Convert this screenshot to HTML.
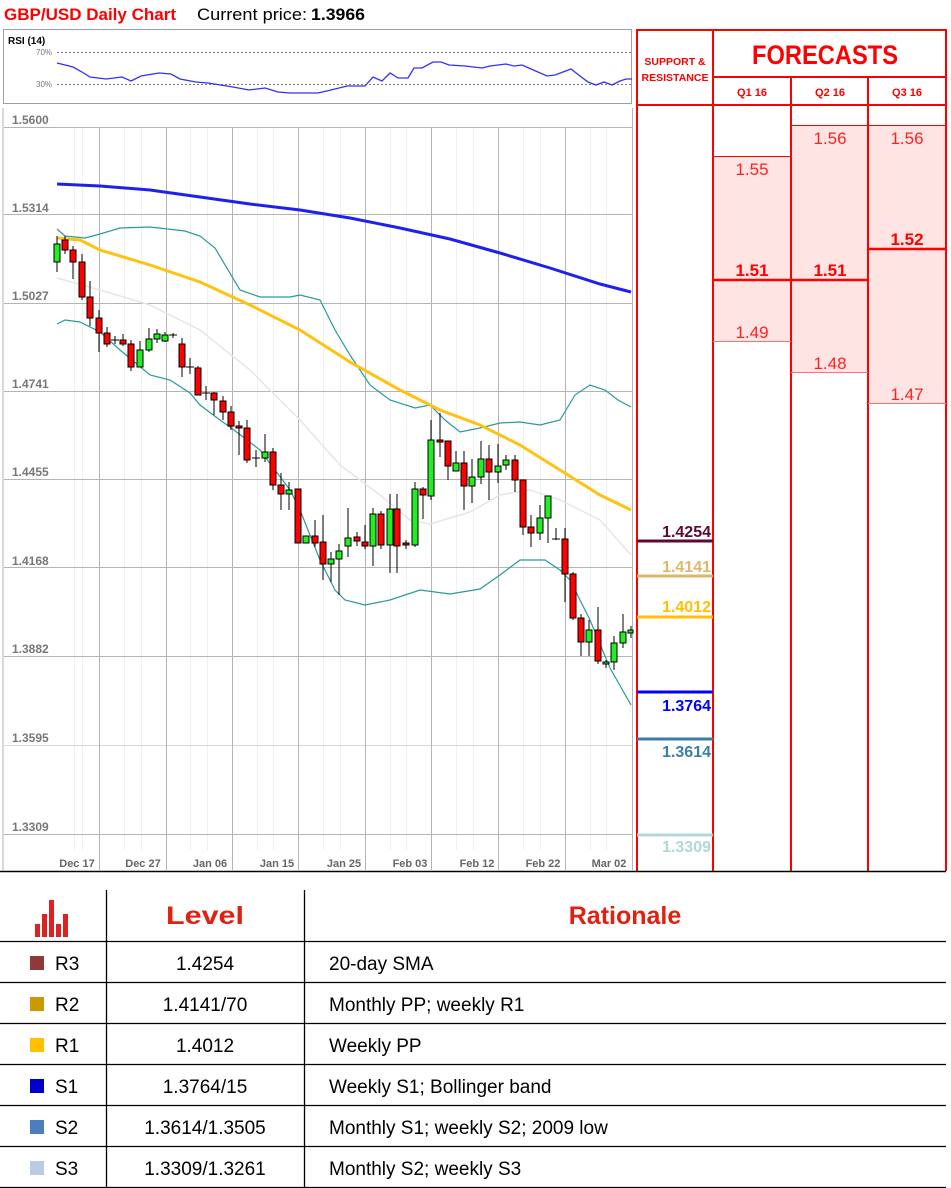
<!DOCTYPE html>
<html><head><meta charset="utf-8"><style>
html,body{margin:0;padding:0;background:#fff;}
svg{display:block;font-family:"Liberation Sans",sans-serif;}
</style></head><body>
<svg width="951" height="1188" viewBox="0 0 951 1188" xmlns="http://www.w3.org/2000/svg">
<!-- Title -->
<text x="4" y="20" font-size="17" font-weight="bold" fill="#ff0000" textLength="172" lengthAdjust="spacingAndGlyphs">GBP/USD Daily Chart</text>
<text x="197" y="20" font-size="17" fill="#000" textLength="110" lengthAdjust="spacingAndGlyphs">Current price:</text>
<text x="311" y="20" font-size="17" font-weight="bold" fill="#000" textLength="54" lengthAdjust="spacingAndGlyphs">1.3966</text>

<!-- RSI box -->
<rect x="3.5" y="29.5" width="628" height="74" fill="#fff" stroke="#a0a0a0"/>
<text x="8" y="44" font-size="10" font-weight="bold" fill="#000">RSI (14)</text>
<text x="36" y="55" font-size="8" fill="#777">70%</text>
<text x="36" y="87" font-size="8" fill="#777">30%</text>
<line x1="57" y1="52.5" x2="631" y2="52.5" stroke="#777" stroke-dasharray="2,2"/>
<line x1="57" y1="84.5" x2="631" y2="84.5" stroke="#777" stroke-dasharray="2,2"/>
<polyline fill="none" stroke="#3030ff" stroke-width="1.3" points="57,63 73,67 82,72 90,77 106,79 122,77 131,81 141,76 159,73 171,74 180,79 196,82 208,83 233,87 249,90 265,88 278,92 290,93 298,93 318,93 331,90 347,86 365,86 373,77 382,81 390,73 398,78 408,78 414,68 422,68 433,62 441,62 449,65 465,66 482,68 490,66 506,64 514,66 522,65 531,69 547,76 555,75 571,69 580,76 588,82 596,85 604,82 612,85 620,81 626,79 632,79"/>

<!-- Price chart -->
<rect x="2" y="108" width="2" height="762" fill="#d8d8d8"/>
<g stroke="#f0f0f0" stroke-width="1">
<line x1="74.5" y1="127" x2="74.5" y2="850"/><line x1="82.5" y1="127" x2="82.5" y2="850"/><line x1="124.5" y1="127" x2="124.5" y2="850"/><line x1="141.5" y1="127" x2="141.5" y2="850"/><line x1="190.5" y1="127" x2="190.5" y2="850"/><line x1="207.5" y1="127" x2="207.5" y2="850"/><line x1="257.5" y1="127" x2="257.5" y2="850"/><line x1="273.5" y1="127" x2="273.5" y2="850"/><line x1="323.5" y1="127" x2="323.5" y2="850"/><line x1="340.5" y1="127" x2="340.5" y2="850"/><line x1="390.5" y1="127" x2="390.5" y2="850"/><line x1="406.5" y1="127" x2="406.5" y2="850"/><line x1="456.5" y1="127" x2="456.5" y2="850"/><line x1="473.5" y1="127" x2="473.5" y2="850"/><line x1="523.5" y1="127" x2="523.5" y2="850"/><line x1="540.5" y1="127" x2="540.5" y2="850"/><line x1="590.5" y1="127" x2="590.5" y2="850"/><line x1="606.5" y1="127" x2="606.5" y2="850"/>
</g>
<g stroke="#b4b4b4" stroke-width="1">
<line x1="4" y1="127.5" x2="632" y2="127.5"/>
<line x1="4" y1="214.5" x2="632" y2="214.5"/>
<line x1="4" y1="303.5" x2="632" y2="303.5"/>
<line x1="4" y1="391.5" x2="632" y2="391.5"/>
<line x1="4" y1="479.5" x2="632" y2="479.5"/>
<line x1="4" y1="567.5" x2="632" y2="567.5"/>
<line x1="4" y1="656.5" x2="632" y2="656.5"/>
<line x1="4" y1="745.5" x2="632" y2="745.5" stroke="#d8d8d8"/>
<line x1="4" y1="834.5" x2="632" y2="834.5"/>
<line x1="99.5" y1="127" x2="99.5" y2="870"/>
<line x1="166.5" y1="127" x2="166.5" y2="870"/>
<line x1="232.5" y1="127" x2="232.5" y2="870"/>
<line x1="298.5" y1="127" x2="298.5" y2="870"/>
<line x1="365.5" y1="127" x2="365.5" y2="870"/>
<line x1="431.5" y1="127" x2="431.5" y2="870"/>
<line x1="498.5" y1="127" x2="498.5" y2="870"/>
<line x1="565.5" y1="127" x2="565.5" y2="870"/>
<line x1="632.5" y1="108" x2="632.5" y2="870"/>
</g>
<g font-size="12" font-weight="bold" fill="#777">
<text x="12" y="124">1.5600</text>
<text x="12" y="212">1.5314</text>
<text x="12" y="300">1.5027</text>
<text x="12" y="388">1.4741</text>
<text x="12" y="476">1.4455</text>
<text x="12" y="565">1.4168</text>
<text x="12" y="653">1.3882</text>
<text x="12" y="742">1.3595</text>
<text x="12" y="831">1.3309</text>
</g>
<g font-size="11" font-weight="bold" fill="#666" text-anchor="middle">
<text x="77" y="867">Dec 17</text><text x="143" y="867">Dec 27</text><text x="210" y="867">Jan 06</text><text x="277" y="867">Jan 15</text><text x="344" y="867">Jan 25</text><text x="410" y="867">Feb 03</text><text x="477" y="867">Feb 12</text><text x="543" y="867">Feb 22</text><text x="609" y="867">Mar 02</text>
</g>

<!-- MAs and bands -->
<polyline fill="none" stroke="#e6e6e6" stroke-width="1.5" points="57,278 100,290 150,305 200,330 250,370 300,420 340,465 380,495 410,520 430,524 470,512 500,495 530,490 560,500 600,520 631,555"/>
<polyline fill="none" stroke="#2a9a98" stroke-width="1.2" points="57,229 65,236 85,238 100,234 120,228 150,227 185,231 200,236 215,248 240,290 260,297 290,297 300,295 320,300 335,330 350,355 370,385 390,400 415,408 430,405 445,420 460,432 480,428 500,423 520,422 540,425 560,420 575,395 590,385 605,390 618,400 631,407"/>
<polyline fill="none" stroke="#2a9a98" stroke-width="1.2" points="57,324 65,320 80,322 100,332 120,350 150,375 170,380 190,393 200,405 220,420 230,427 260,450 290,490 300,510 320,560 335,590 345,600 365,605 390,600 420,590 450,594 480,589 500,575 520,560 545,560 560,570 570,580 590,620 610,668 631,705"/>
<polyline fill="none" stroke="#ffc20e" stroke-width="3" points="57,238 80,240 100,250 150,265 200,282 250,305 300,330 350,362 400,390 440,410 480,425 520,445 560,470 600,495 631,510"/>
<polyline fill="none" stroke="#2020ee" stroke-width="3" points="57,184 100,186 150,190 200,197 250,204 300,210 350,218 400,228 450,239 500,253 550,268 600,284 631,292"/>

<!-- Candles -->
<g stroke="#000" stroke-width="1">
<line x1="57" y1="236" x2="57" y2="272"/><rect x="54" y="244" width="6" height="18" fill="#22ee22"/>
<line x1="65" y1="236" x2="65" y2="254"/><rect x="62" y="240" width="6" height="10" fill="#f00"/>
<line x1="73" y1="246" x2="73" y2="279"/><rect x="70" y="250" width="6" height="12" fill="#f00"/>
<line x1="82" y1="254" x2="82" y2="300"/><rect x="79" y="262" width="6" height="35" fill="#f00"/>
<line x1="90" y1="281" x2="90" y2="326"/><rect x="87" y="297" width="6" height="21" fill="#f00"/>
<line x1="99" y1="310" x2="99" y2="352"/><rect x="96" y="318" width="6" height="15" fill="#f00"/>
<line x1="107" y1="327" x2="107" y2="347"/><rect x="104" y="333" width="6" height="11" fill="#f00"/>
<line x1="115" y1="336" x2="115" y2="344"/><line x1="111" y1="340" x2="119" y2="340"/>
<line x1="123" y1="334" x2="123" y2="346"/><rect x="120" y="340" width="6" height="4" fill="#f00"/>
<line x1="131" y1="340" x2="131" y2="371"/><rect x="128" y="344" width="6" height="23" fill="#f00"/>
<line x1="140" y1="341" x2="140" y2="367"/><rect x="137" y="350" width="6" height="17" fill="#22ee22"/>
<line x1="149" y1="328" x2="149" y2="352"/><rect x="146" y="339" width="6" height="11" fill="#22ee22"/>
<line x1="157" y1="329" x2="157" y2="343"/><rect x="154" y="334" width="6" height="5" fill="#22ee22"/>
<line x1="165" y1="332" x2="165" y2="342"/><rect x="162" y="335" width="6" height="6" fill="#22ee22"/>
<line x1="173" y1="333" x2="173" y2="338"/><line x1="169" y1="335" x2="177" y2="335"/>
<line x1="182" y1="338" x2="182" y2="377"/><rect x="179" y="344" width="6" height="23" fill="#f00"/>
<line x1="190" y1="358" x2="190" y2="374"/><line x1="186" y1="367" x2="194" y2="367"/>
<line x1="198" y1="366" x2="198" y2="395"/><rect x="195" y="368" width="6" height="27" fill="#f00"/>
<line x1="206" y1="386" x2="206" y2="400"/><line x1="202" y1="393" x2="210" y2="393"/>
<line x1="214" y1="392" x2="214" y2="415"/><rect x="211" y="393" width="6" height="7" fill="#f00"/>
<line x1="223" y1="396" x2="223" y2="420"/><rect x="220" y="401" width="6" height="11" fill="#f00"/>
<line x1="231" y1="406" x2="231" y2="430"/><rect x="228" y="412" width="6" height="14" fill="#f00"/>
<line x1="239" y1="421" x2="239" y2="455"/><rect x="236" y="426" width="6" height="2" fill="#f00"/>
<line x1="247" y1="420" x2="247" y2="463"/><rect x="244" y="428" width="6" height="32" fill="#f00"/>
<line x1="256" y1="450" x2="256" y2="467"/><line x1="252" y1="458" x2="260" y2="458"/>
<line x1="265" y1="434" x2="265" y2="462"/><rect x="262" y="452" width="6" height="6" fill="#22ee22"/>
<line x1="273" y1="448" x2="273" y2="490"/><rect x="270" y="452" width="6" height="33" fill="#f00"/>
<line x1="281" y1="473" x2="281" y2="510"/><rect x="278" y="485" width="6" height="9" fill="#f00"/>
<line x1="289" y1="482" x2="289" y2="510"/><rect x="286" y="490" width="6" height="4" fill="#22ee22"/>
<line x1="298" y1="489" x2="298" y2="543"/><rect x="295" y="489" width="6" height="54" fill="#f00"/>
<line x1="306" y1="536" x2="306" y2="543"/><rect x="303" y="536" width="6" height="7" fill="#22ee22"/>
<line x1="315" y1="520" x2="315" y2="547"/><rect x="312" y="536" width="6" height="7" fill="#f00"/>
<line x1="323" y1="515" x2="323" y2="580"/><rect x="320" y="542" width="6" height="22" fill="#f00"/>
<line x1="331" y1="552" x2="331" y2="582"/><rect x="328" y="559" width="6" height="5" fill="#22ee22"/>
<line x1="339" y1="544" x2="339" y2="595"/><rect x="336" y="551" width="6" height="8" fill="#22ee22"/>
<line x1="348" y1="508" x2="348" y2="557"/><rect x="345" y="538" width="6" height="8" fill="#22ee22"/>
<line x1="357" y1="532" x2="357" y2="546"/><rect x="354" y="537" width="6" height="4" fill="#f00"/>
<line x1="365" y1="525" x2="365" y2="549"/><rect x="362" y="542" width="6" height="4" fill="#f00"/>
<line x1="373" y1="508" x2="373" y2="566"/><rect x="370" y="514" width="6" height="32" fill="#22ee22"/>
<line x1="381" y1="511" x2="381" y2="549"/><rect x="378" y="514" width="6" height="31" fill="#f00"/>
<line x1="390" y1="494" x2="390" y2="573"/><rect x="387" y="509" width="6" height="36" fill="#22ee22"/>
<line x1="397" y1="494" x2="397" y2="573"/><rect x="394" y="509" width="6" height="37" fill="#f00"/>
<line x1="406" y1="540" x2="406" y2="549"/><rect x="403" y="543" width="6" height="2" fill="#f00"/>
<line x1="415" y1="482" x2="415" y2="547"/><rect x="412" y="489" width="6" height="56" fill="#22ee22"/>
<line x1="423" y1="487" x2="423" y2="519"/><rect x="420" y="489" width="6" height="6" fill="#f00"/>
<line x1="431" y1="420" x2="431" y2="500"/><rect x="428" y="440" width="6" height="56" fill="#22ee22"/>
<line x1="440" y1="413" x2="440" y2="457"/><rect x="437" y="440" width="6" height="2" fill="#f00"/>
<line x1="448" y1="441" x2="448" y2="480"/><rect x="445" y="441" width="6" height="25" fill="#f00"/>
<line x1="456" y1="451" x2="456" y2="471"/><rect x="453" y="463" width="6" height="8" fill="#22ee22"/>
<line x1="464" y1="451" x2="464" y2="510"/><rect x="461" y="463" width="6" height="23" fill="#f00"/>
<line x1="472" y1="459" x2="472" y2="503"/><rect x="469" y="477" width="6" height="9" fill="#22ee22"/>
<line x1="481" y1="441" x2="481" y2="484"/><rect x="478" y="459" width="6" height="18" fill="#22ee22"/>
<line x1="489" y1="445" x2="489" y2="500"/><rect x="486" y="459" width="6" height="13" fill="#f00"/>
<line x1="498" y1="444" x2="498" y2="483"/><rect x="495" y="466" width="6" height="6" fill="#22ee22"/>
<line x1="506" y1="455" x2="506" y2="470"/><rect x="503" y="460" width="6" height="5" fill="#22ee22"/>
<line x1="515" y1="455" x2="515" y2="492"/><rect x="512" y="460" width="6" height="20" fill="#f00"/>
<line x1="523" y1="480" x2="523" y2="535"/><rect x="520" y="480" width="6" height="47" fill="#f00"/>
<line x1="531" y1="515" x2="531" y2="547"/><rect x="528" y="527" width="6" height="6" fill="#f00"/>
<line x1="540" y1="505" x2="540" y2="540"/><rect x="537" y="518" width="6" height="15" fill="#22ee22"/>
<line x1="548" y1="496" x2="548" y2="543"/><rect x="545" y="496" width="6" height="22" fill="#22ee22"/>
<line x1="556" y1="528" x2="556" y2="540"/><line x1="552" y1="539" x2="560" y2="539"/>
<line x1="565" y1="528" x2="565" y2="602"/><rect x="562" y="539" width="6" height="35" fill="#f00"/>
<line x1="573" y1="572" x2="573" y2="620"/><rect x="570" y="574" width="6" height="44" fill="#f00"/>
<line x1="581" y1="614" x2="581" y2="656"/><rect x="578" y="618" width="6" height="24" fill="#f00"/>
<line x1="589" y1="620" x2="589" y2="656"/><rect x="586" y="630" width="6" height="12" fill="#22ee22"/>
<line x1="598" y1="607" x2="598" y2="664"/><rect x="595" y="630" width="6" height="31" fill="#f00"/>
<line x1="606" y1="660" x2="606" y2="668"/><rect x="603" y="662" width="6" height="2" fill="#22ee22"/>
<line x1="614" y1="636" x2="614" y2="670"/><rect x="611" y="643" width="6" height="19" fill="#22ee22"/>
<line x1="623" y1="614" x2="623" y2="648"/><rect x="620" y="632" width="6" height="11" fill="#22ee22"/>
<line x1="631" y1="626" x2="631" y2="638"/><rect x="628" y="630" width="5" height="3" fill="#22ee22"/>
</g>

<!-- Forecast panel -->
<rect x="713" y="156" width="78" height="185" fill="#ffe4e4"/>
<rect x="791" y="125" width="77" height="248" fill="#ffe4e4"/>
<rect x="868" y="125" width="78" height="278" fill="#ffe4e4"/>
<g stroke="#ff0000" stroke-width="2">
<line x1="637" y1="29" x2="637" y2="871"/>
<line x1="713" y1="29" x2="713" y2="871"/>
<line x1="791" y1="77" x2="791" y2="871"/>
<line x1="868" y1="77" x2="868" y2="871"/>
<line x1="946" y1="29" x2="946" y2="871"/>
<line x1="636" y1="30" x2="947" y2="30"/>
<line x1="713" y1="77" x2="947" y2="77"/>
<line x1="636" y1="105" x2="947" y2="105"/>
</g>
<g stroke="#ff0000" stroke-width="1">
<line x1="713" y1="156.5" x2="791" y2="156.5"/>
<line x1="791" y1="125.5" x2="946" y2="125.5"/>
</g>
<g stroke="#ff0000" stroke-width="2.5">
<line x1="713" y1="280" x2="868" y2="280"/>
<line x1="868" y1="249" x2="946" y2="249"/>
</g>
<g stroke="#ff7070" stroke-width="1">
<line x1="713" y1="341.5" x2="791" y2="341.5"/>
<line x1="791" y1="372.5" x2="868" y2="372.5"/>
<line x1="868" y1="403.5" x2="946" y2="403.5"/>
</g>
<g fill="#ff0000" text-anchor="middle">
<text x="675" y="65" font-size="10.5" font-weight="bold">SUPPORT &amp;</text>
<text x="675" y="81" font-size="10.5" font-weight="bold">RESISTANCE</text>
<text x="825" y="64" font-size="27" font-weight="bold" textLength="146" lengthAdjust="spacingAndGlyphs">FORECASTS</text>
<text x="752" y="96" font-size="11" font-weight="bold">Q1 16</text>
<text x="830" y="96" font-size="11" font-weight="bold">Q2 16</text>
<text x="907" y="96" font-size="11" font-weight="bold">Q3 16</text>
<g font-size="17" fill="#ff2020">
<text x="752" y="175">1.55</text>
<text x="752" y="338">1.49</text>
<text x="830" y="144">1.56</text>
<text x="830" y="369">1.48</text>
<text x="907" y="144">1.56</text>
<text x="907" y="400">1.47</text>
</g>
<g font-size="17" font-weight="bold">
<text x="752" y="276">1.51</text>
<text x="830" y="276">1.51</text>
<text x="907" y="245">1.52</text>
</g>
</g>

<!-- S/R levels -->
<g stroke-width="3">
<line x1="637" y1="541" x2="713" y2="541" stroke="#5c0a33"/>
<line x1="637" y1="576" x2="713" y2="576" stroke="#dcb96a"/>
<line x1="637" y1="617" x2="713" y2="617" stroke="#ffc000"/>
<line x1="637" y1="692" x2="713" y2="692" stroke="#0000ff"/>
<line x1="637" y1="739" x2="713" y2="739" stroke="#3a7ea8"/>
<line x1="637" y1="835" x2="713" y2="835" stroke="#b0d8d8"/>
</g>
<g font-size="16" font-weight="bold" text-anchor="end">
<text x="711" y="537" fill="#5c0a33">1.4254</text>
<text x="711" y="572" fill="#dcb96a">1.4141</text>
<text x="711" y="612" fill="#ffc000">1.4012</text>
<text x="711" y="711" fill="#0000ff">1.3764</text>
<text x="711" y="757" fill="#3a7ea8">1.3614</text>
<text x="711" y="852" fill="#b0d8d8">1.3309</text>
</g>
<line x1="0" y1="871.5" x2="946" y2="871.5" stroke="#000" stroke-width="1.5"/>

<!-- Table -->
<g stroke="#000" stroke-width="1.3">
<line x1="106.5" y1="890" x2="106.5" y2="1188"/>
<line x1="304.5" y1="890" x2="304.5" y2="1188"/>
<line x1="0" y1="941.5" x2="946" y2="941.5"/>
<line x1="0" y1="982.5" x2="946" y2="982.5"/>
<line x1="0" y1="1023.5" x2="946" y2="1023.5"/>
<line x1="0" y1="1064.5" x2="946" y2="1064.5"/>
<line x1="0" y1="1105.5" x2="946" y2="1105.5"/>
<line x1="0" y1="1146.5" x2="946" y2="1146.5"/>
<line x1="0" y1="1187.5" x2="946" y2="1187.5"/>
</g>
<g fill="#dd2222">
<rect x="35" y="924" width="5" height="13"/>
<rect x="42" y="914" width="5" height="23"/>
<rect x="49" y="900" width="5" height="37"/>
<rect x="56" y="924" width="5" height="13"/>
<rect x="63" y="914" width="5" height="23"/>
</g>
<text x="205" y="924" font-size="25" font-weight="bold" fill="#e02010" text-anchor="middle" textLength="78" lengthAdjust="spacingAndGlyphs">Level</text>
<text x="625" y="924" font-size="25" font-weight="bold" fill="#e02010" text-anchor="middle">Rationale</text>
<g font-size="19" fill="#000">
<rect x="30" y="956" width="14" height="14" fill="#8e3a3a"/>
<rect x="30" y="997" width="14" height="14" fill="#cc9a00"/>
<rect x="30" y="1038" width="14" height="14" fill="#ffc000"/>
<rect x="30" y="1079" width="14" height="14" fill="#0000cc"/>
<rect x="30" y="1120" width="14" height="14" fill="#4a7ebf"/>
<rect x="30" y="1161" width="14" height="14" fill="#b8cce4"/>
<text x="55" y="970">R3</text>
<text x="55" y="1011">R2</text>
<text x="55" y="1052">R1</text>
<text x="55" y="1093">S1</text>
<text x="55" y="1134">S2</text>
<text x="55" y="1175">S3</text>
<g text-anchor="middle">
<text x="205" y="970">1.4254</text>
<text x="205" y="1011">1.4141/70</text>
<text x="205" y="1052">1.4012</text>
<text x="205" y="1093">1.3764/15</text>
<text x="205" y="1134">1.3614/1.3505</text>
<text x="205" y="1175">1.3309/1.3261</text>
</g>
<text x="329" y="970">20-day SMA</text>
<text x="329" y="1011">Monthly PP; weekly R1</text>
<text x="329" y="1052">Weekly PP</text>
<text x="329" y="1093">Weekly S1; Bollinger band</text>
<text x="329" y="1134">Monthly S1; weekly S2; 2009 low</text>
<text x="329" y="1175">Monthly S2; weekly S3</text>
</g>
</svg>
</body></html>
